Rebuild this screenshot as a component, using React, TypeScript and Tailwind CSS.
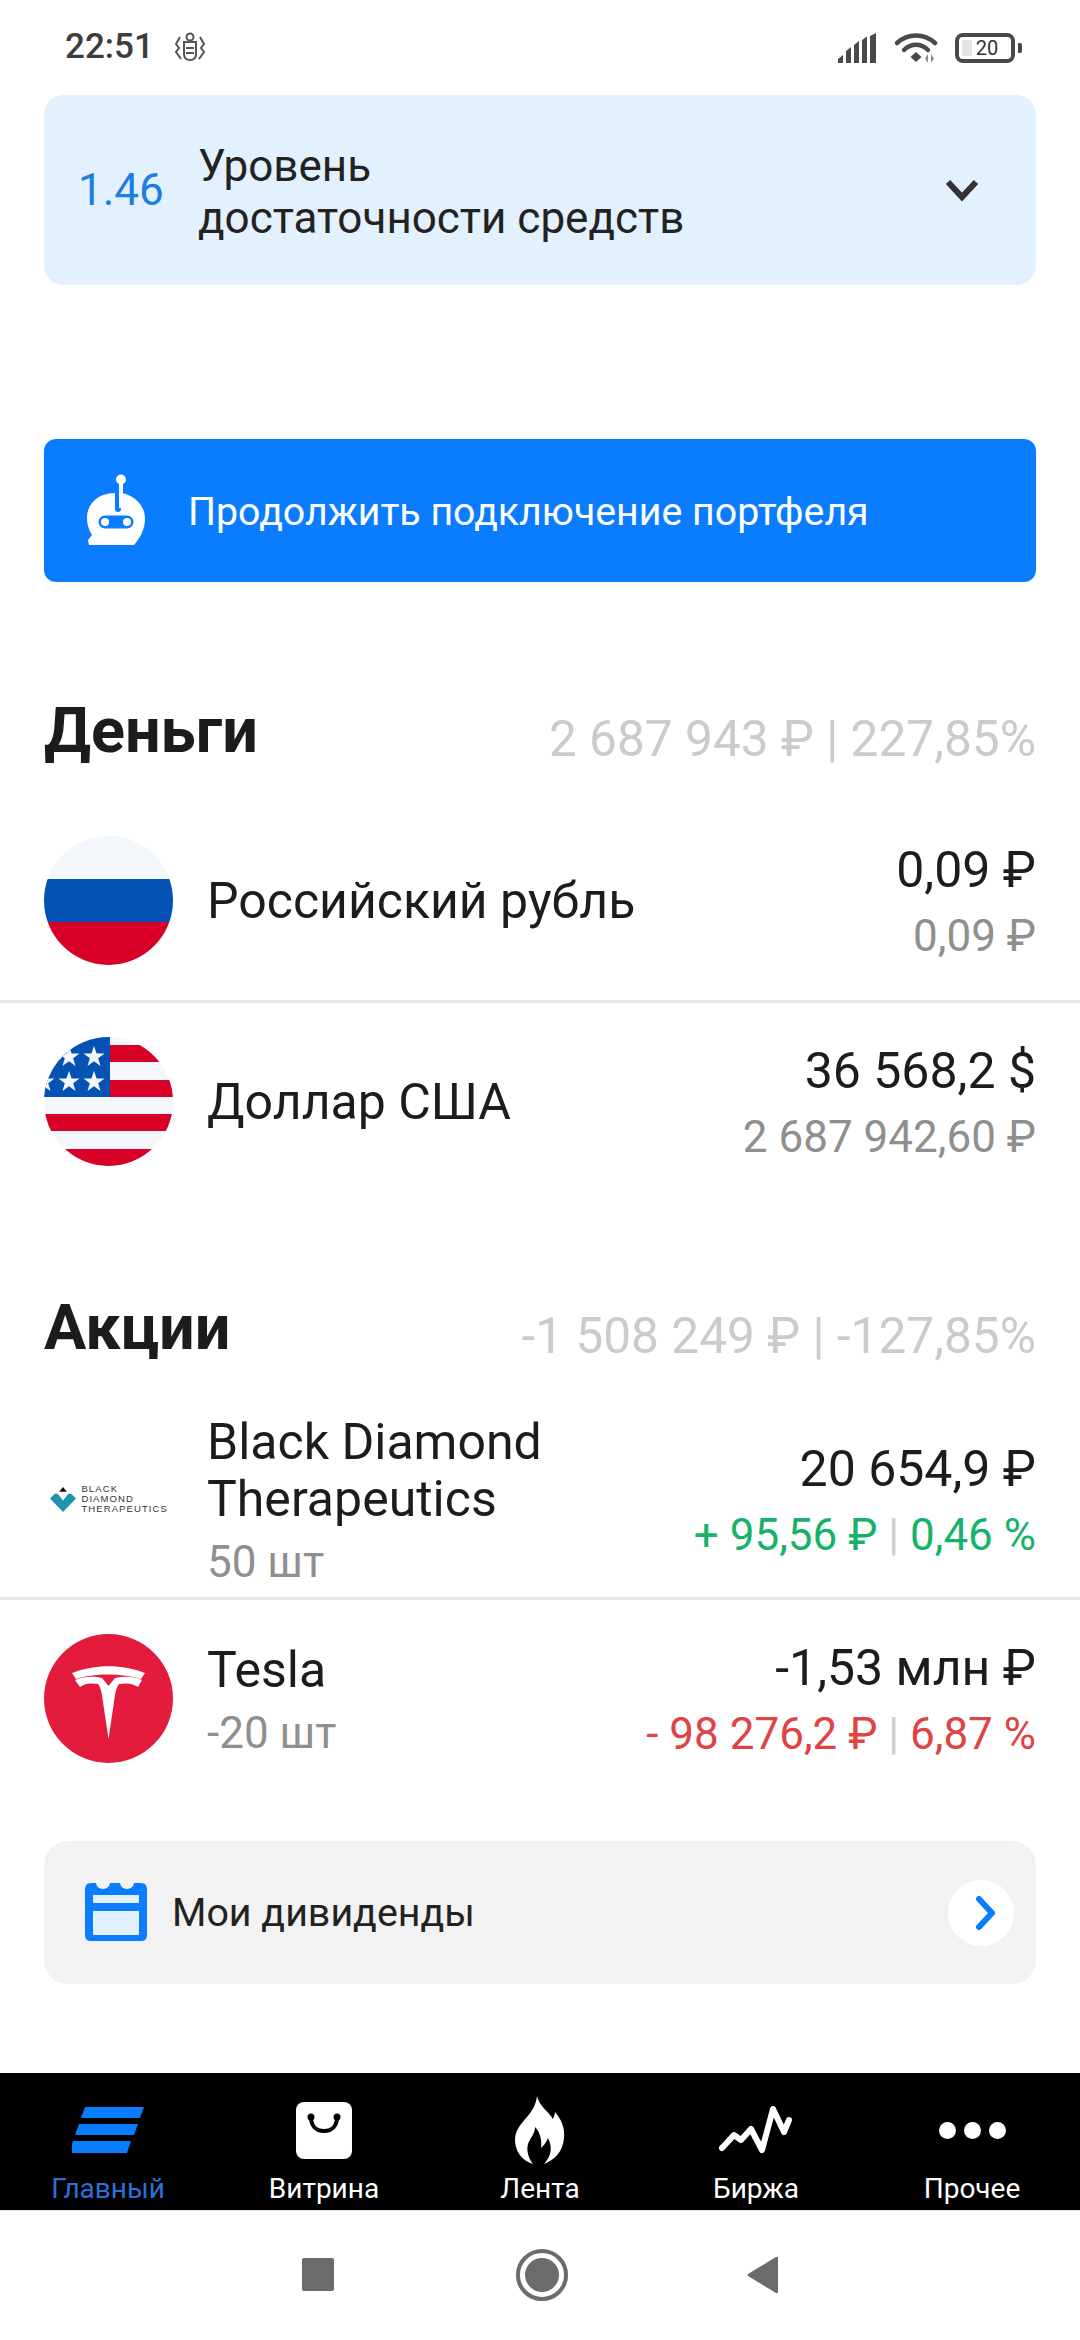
import { ReactNode } from "react";

function SignalIcon() {
  return (
    <svg width="41" height="30" viewBox="0 0 41 30" fill="#4a4a4a">
      <path d="M0 30v-4l5-4v8zM8 30V18.500a1 1 0 0 1 .4-.8L13 14v16zM16 30V12l5-4v22zM24 30V7l5-3.500V30zM32 30V3l6-3v30z" />
    </svg>
  );
}

function WifiIcon() {
  return (
    <svg width="44" height="32" viewBox="0 0 44 32" fill="none">
      <path d="M2 11C13 1 29 1 40 11" stroke="#4a4a4a" strokeWidth="4.500" strokeLinecap="round" />
      <path d="M9 18C16 11 26 11 33 18" stroke="#4a4a4a" strokeWidth="4.500" strokeLinecap="round" />
      <path d="M15.500 25l5.500-5 5.500 5-5.500 5z" fill="#4a4a4a" />
      <path d="M33 22v9l-3-4.500zM36 22v9l3-4.500z" fill="#8a8a8a" />
    </svg>
  );
}

function Battery() {
  return (
    <div className="flex items-center gap-[3px]">
      <div className="relative flex h-[30px] w-[60px] items-center justify-center rounded-[8px] border-[4px] border-[#4a4a4a] pl-[4px]">
        <div className="absolute left-[3px] top-[3px] h-[16px] w-[10px] bg-[#e4e4e4]" />
        <span className="relative text-[20px] leading-none text-[#333]">20</span>
      </div>
      <div className="h-[10px] w-[4px] rounded-r-[2px] bg-[#4a4a4a]" />
    </div>
  );
}

function RobotIcon() {
  return (
    <svg width="60" height="74" viewBox="0 0 60 74" fill="none">
      <circle cx="35" cy="5.500" r="5" fill="#fff" />
      <rect x="33" y="8" width="4" height="26" fill="#fff" />
      <path d="M1 44C1 29 13 19 29 19V35a3 3 0 0 0 6 0V19C49 21 59 32 59 45C59 54 55 63 48 71H3L2 66L6 61C3 56 1 51 1 44Z" fill="#fff" />
      <rect x="12.500" y="41.500" width="35" height="13" rx="6.500" fill="#0a7cff" />
      <circle cx="19" cy="48" r="4" fill="#fff" />
      <circle cx="41" cy="48" r="4" fill="#fff" />
    </svg>
  );
}

function RuFlag() {
  return (
    <svg width="129" height="129" viewBox="0 0 129 129" className="shrink-0">
      <defs>
        <clipPath id="ru"><circle cx="64.500" cy="64.500" r="64.500" /></clipPath>
      </defs>
      <g clipPath="url(#ru)">
        <rect width="129" height="43" fill="#f3f6fa" />
        <rect y="43" width="129" height="43" fill="#0552b5" />
        <rect y="86" width="129" height="43" fill="#d80027" />
      </g>
    </svg>
  );
}

const starPoints = "0,-11 2.600,-3.500 10.500,-3.400 4.200,1.300 6.500,8.900 0,4.300 -6.500,8.900 -4.200,1.300 -10.500,-3.400 -2.600,-3.500";

function UsFlag() {
  return (
    <svg width="129" height="129" viewBox="0 0 129 129" className="shrink-0">
      <defs>
        <clipPath id="us"><circle cx="64.500" cy="64.500" r="64.500" /></clipPath>
      </defs>
      <g clipPath="url(#us)">
        <rect width="129" height="129" fill="#f3f6fa" />
        <rect x="65" y="8" width="64" height="17" fill="#d80027" />
        <rect x="65" y="43" width="64" height="17" fill="#d80027" />
        <rect y="77" width="129" height="17" fill="#d80027" />
        <rect y="112" width="129" height="17" fill="#d80027" />
        <rect width="66" height="60" fill="#0552b5" />
        {[[25, 20], [50, 20], [0, 45], [25, 45], [50, 45]].map(([x, y]) => (
          <polygon key={`${x}-${y}`} points={starPoints} transform={`translate(${x} ${y})`} fill="#f3f6fa" />
        ))}
      </g>
    </svg>
  );
}

function DiamondLogo() {
  return (
    <div className="flex w-[129px] shrink-0 items-center justify-end gap-[5px] pr-[5px]">
      <svg width="26" height="26" viewBox="0 0 27 27">
        <path d="M9.500 6l4-5 4 5z" fill="#111" />
        <path d="M0 13l5-5h3l5.500 7L19 8h3l5 5-13.500 14z" fill="#1e95ad" />
      </svg>
      <div className="font-['Liberation_Sans',sans-serif] text-[9.500px] leading-[10px] tracking-[1.1px] text-[#333]">
        <div>BLACK</div>
        <div>DIAMOND</div>
        <div>THERAPEUTICS</div>
      </div>
    </div>
  );
}

function TeslaLogo() {
  return (
    <svg width="129" height="129" viewBox="0 0 129 129" className="shrink-0">
      <circle cx="64.500" cy="64.500" r="64.500" fill="#e31b3c" />
      <path d="M28 39C50 30 79 30 101 39L97 45C78 39 50 39 32 45Z" fill="#fff" />
      <path d="M31 46C40 42 50 42 58 44L64.500 52L71 44C80 42 90 42 98 46L94 53C88 49 82 49 75 50C72 54 71 60 70 68L64.500 105L59 68C58 60 57 54 54 50C47 49 41 49 36 53Z" fill="#fff" />
    </svg>
  );
}

function CalendarIcon() {
  return (
    <svg width="62" height="58" viewBox="0 0 62 58">
      <path d="M6 0H11a7 6 0 0 0 14 0H35a7 6 0 0 0 14 0H56q6 0 6 6V52q0 6-6 6H6q-6 0-6-6V6q0-6 6-6z" fill="#0a7cff" />
      <rect x="8" y="12" width="46" height="8" fill="#e3f0fd" />
      <rect x="8" y="28" width="46" height="24" fill="#e3f0fd" />
    </svg>
  );
}

function MenuStack() {
  return (
    <svg width="72" height="46" viewBox="0 0 72 46" fill="#0a7cff">
      <path d="M13 0h59l-4 11H9zM7 17h59l-4 11H3zM1 34h58l-4 12H-3z" />
    </svg>
  );
}

function BagIcon() {
  return (
    <div className="flex h-[57px] w-[56px] items-start justify-center rounded-[8px] bg-white pt-[11px]">
      <svg width="34" height="22" viewBox="0 0 34 22" fill="none">
        <path d="M4 4c0 9 5 14 13 14s13-5 13-14" stroke="#000" strokeWidth="4" />
        <circle cx="4" cy="4" r="3.500" fill="#000" />
        <circle cx="30" cy="4" r="3.500" fill="#000" />
      </svg>
    </div>
  );
}

function FlameIcon() {
  return (
    <svg width="50" height="68" viewBox="0 0 50 68" fill="#fff">
      <path d="M22 0C24 10 34 16 38 23C39 20 40 18 40 16C47 24 50 33 49 42C48 55 40 64 29 68C36 60 38 52 33 42C31 47 28 50 26 52C27 44 25 36 20 31C20 38 15 42 13 48C11 55 14 63 18 68C7 65 0 55 0 44C0 34 6 28 12 21C17 15 21 9 22 0Z" />
    </svg>
  );
}

function ChartIcon() {
  return (
    <svg width="74" height="50" viewBox="0 0 74 50" fill="none">
      <path d="M3 43L15 30L22 35L32 24L43 45L54 4L65 27L70 15" stroke="#fff" strokeWidth="6" strokeLinecap="round" strokeLinejoin="round" />
    </svg>
  );
}

function DotsIcon() {
  return (
    <div className="flex gap-[8px]">
      <div className="size-[17px] rounded-full bg-white" />
      <div className="size-[17px] rounded-full bg-white" />
      <div className="size-[17px] rounded-full bg-white" />
    </div>
  );
}

function SectionTitle({ title, summary }: { title: string; summary: string }) {
  return (
    <div className="flex h-[64px] items-start justify-between">
      <h2 className="text-[63px] font-bold leading-[64px] text-[#1c1c1c]">{title}</h2>
      <span className="mt-[8px] text-[49.600px] leading-[64px] text-[#cbcbcb]">{summary}</span>
    </div>
  );
}

function Row({ icon, name, sub, right, className }: { icon: ReactNode; name: ReactNode; sub?: string; right: ReactNode; className: string }) {
  return (
    <div className={`flex items-center px-[44px] ${className}`}>
      {icon}
      <div className="ml-[34px] flex-1 pt-[3px]">
        <div className="text-[50px] leading-[57px] text-[#1c1c1c]">{name}</div>
        {sub && <div className="mt-[9px] text-[44px] leading-[50px] text-[#8f8f8f]">{sub}</div>}
      </div>
      <div className="flex flex-col items-end gap-[16px] pt-[6px]">{right}</div>
    </div>
  );
}

function Amount({ main, sub }: { main: string; sub: ReactNode }) {
  return (
    <>
      <div className="text-[50px] leading-[50px] text-[#1c1c1c]">{main}</div>
      <div className="text-[44px] leading-[50px] text-[#8f8f8f]">{sub}</div>
    </>
  );
}

function NavItem({ icon, label, active }: { icon: ReactNode; label: string; active?: boolean }) {
  return (
    <div className="flex flex-1 flex-col items-center">
      <div className="flex h-[74px] items-center justify-center">{icon}</div>
      <span className={`mt-[5px] text-[28px] leading-[34px] ${active ? "text-[#2a72d8]" : "text-white"}`}>{label}</span>
    </div>
  );
}

export default function App() {
  return (
    <div className="flex h-[2340px] w-[1080px] flex-col overflow-hidden bg-white font-['Roboto',sans-serif]">
      {/* статус бар */}
      <div className="flex h-[95px] items-center justify-between pl-[65px] pr-[58px]">
        <div className="flex items-center gap-[19px]">
          <span className="text-[35px] font-medium text-[#3c3c3c]">22:51</span>
          <svg width="34" height="32" viewBox="0 0 34 32" fill="none" stroke="#555" strokeWidth="2">
            <circle cx="17" cy="5" r="3.500" />
            <path d="M11 10h12v12q0 6-6 6t-6-6z" />
            <path d="M7 5L3 12l3 4-3 4 5 7M27 5l4 7-3 4 3 4-5 7M13 16h8M13 21h8" />
          </svg>
        </div>
        <div className="flex items-center gap-[16px]">
          <SignalIcon />
          <WifiIcon />
          <Battery />
        </div>
      </div>

      <div className="mx-[44px] flex h-[190px] items-center rounded-[20px] bg-[#e3f0fd] pl-[34px] pr-[57px]">
        <span className="w-[120px] text-[44px] text-[#1a7fe0]">1.46</span>
        <div className="flex-1 pt-[3px] text-[44px] leading-[52px] text-[#222]">
          Уровень
          <br />
          достаточности средств
        </div>
        <svg width="34" height="24" viewBox="0 0 34 24" fill="none">
          <path d="M3 4l14 15L31 4" stroke="#333" strokeWidth="6" />
        </svg>
      </div>

      <div className="mx-[44px] mt-[154px] flex h-[143px] items-center rounded-[12px] bg-[#0a7cff] pl-[42px]">
        <RobotIcon />
        <span className="ml-[42px] pt-[3px] text-[39.3px] text-white">Продолжить подключение портфеля</span>
      </div>

      <div className="mx-[44px] mt-[117px]">
        <SectionTitle title="Деньги" summary="2 687 943 ₽ | 227,85%" />
      </div>

      <Row
        className="mt-[37px] h-[203px] border-b-[3px] border-[#e6e6e6]"
        icon={<RuFlag />}
        name="Российский рубль"
        right={<Amount main="0,09 ₽" sub="0,09 ₽" />}
      />
      <Row
        className="h-[196px]"
        icon={<UsFlag />}
        name="Доллар США"
        right={<Amount main="36 568,2 $" sub="2 687 942,60 ₽" />}
      />

      <div className="mx-[44px] mt-[97px]">
        <SectionTitle title="Акции" summary="-1 508 249 ₽ | -127,85%" />
      </div>

      <Row
        className="mt-[40px] h-[200px] border-b-[3px] border-[#e6e6e6]"
        icon={<DiamondLogo />}
        name={<>Black Diamond<br />Therapeutics</>}
        sub="50 шт"
        right={<Amount main="20 654,9 ₽" sub={<span className="text-[#17b26a]">+ 95,56 ₽ <span className="text-[#cfcfcf]">|</span> 0,46 %</span>} />}
      />
      <Row
        className="h-[196px]"
        icon={<TeslaLogo />}
        name="Tesla"
        sub="-20 шт"
        right={<Amount main="-1,53 млн ₽" sub={<span className="text-[#e04343]">- 98 276,2 ₽ <span className="text-[#cfcfcf]">|</span> 6,87 %</span>} />}
      />

      <div className="mx-[44px] mt-[45px] flex h-[143px] items-center justify-between rounded-[24px] bg-[#f2f2f2] pl-[41px] pr-[22px]">
        <div className="flex items-center gap-[25px]">
          <CalendarIcon />
          <span className="text-[39.4px] text-[#222]">Мои дивиденды</span>
        </div>
        <div className="flex size-[66px] items-center justify-center rounded-full bg-white pl-[10px]">
          <svg width="22" height="34" viewBox="0 0 22 34" fill="none">
            <path d="M4 3l13 14L4 31" stroke="#0a7cff" strokeWidth="6" strokeLinecap="round" strokeLinejoin="round" />
          </svg>
        </div>
      </div>

      <div className="mt-[89px] flex h-[137px] bg-black pt-[20px]">
        <NavItem icon={<MenuStack />} label="Главный" active />
        <NavItem icon={<BagIcon />} label="Витрина" />
        <NavItem icon={<FlameIcon />} label="Лента" />
        <NavItem icon={<ChartIcon />} label="Биржа" />
        <NavItem icon={<DotsIcon />} label="Прочее" />
      </div>

      <div className="flex flex-1 items-center justify-center border-t border-[#e8e8e8] pb-[2px]">
        <div className="h-[33px] w-[32px] rounded-[2px] bg-[#6b6b6b]" />
        <div className="ml-[182px] flex size-[52px] items-center justify-center rounded-full border-[4px] border-[#6b6b6b]">
          <div className="size-[34px] rounded-full bg-[#6b6b6b]" />
        </div>
        <svg width="32" height="38" viewBox="0 0 32 38" className="ml-[179px]">
          <path d="M31 2v34q0 2-2 1L1 20q-1-1 0-2L29 1q2-1 2 1z" fill="#6b6b6b" />
        </svg>
      </div>
    </div>
  );
}
